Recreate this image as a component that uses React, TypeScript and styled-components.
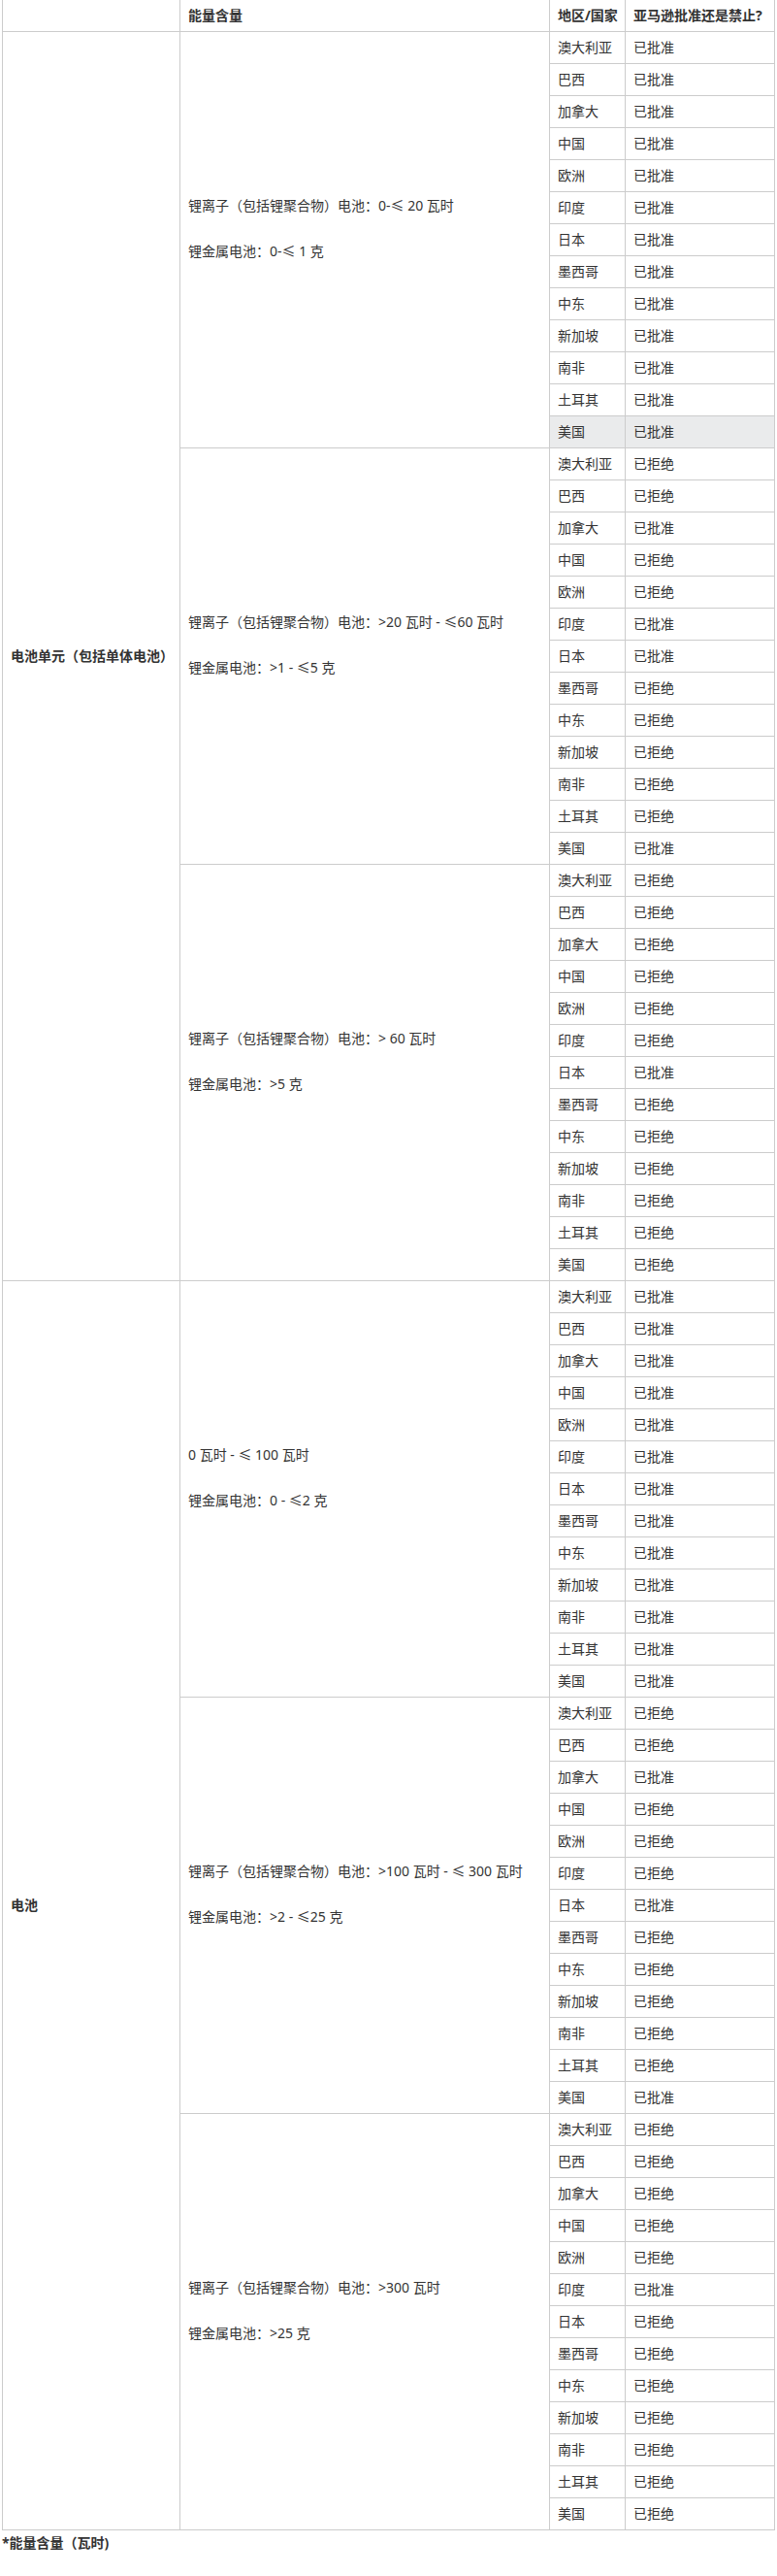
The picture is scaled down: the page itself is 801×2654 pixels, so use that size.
import React from "react";
import styled, { createGlobalStyle } from "styled-components";

const GlobalStyle = createGlobalStyle`
  html, body {
    margin: 0;
    padding: 0;
    background: #ffffff;
  }
  body {
    font-family: "Noto Sans", "Noto Sans CJK SC", sans-serif;
    font-size: 14px;
    color: #333333;
  }
`;

type Status = "已批准" | "已拒绝";

interface Group {
  energy: [string, string];
  results: Status[];
}

interface Section {
  title: string;
  groups: Group[];
}

const regions = [
  "澳大利亚",
  "巴西",
  "加拿大",
  "中国",
  "欧洲",
  "印度",
  "日本",
  "墨西哥",
  "中东",
  "新加坡",
  "南非",
  "土耳其",
  "美国",
];

const A: Status = "已批准";
const R: Status = "已拒绝";

const sections: Section[] = [
  {
    title: "电池单元（包括单体电池）",
    groups: [
      {
        energy: ["锂离子（包括锂聚合物）电池：0-≤ 20 瓦时", "锂金属电池：0-≤ 1 克"],
        results: [A, A, A, A, A, A, A, A, A, A, A, A, A],
      },
      {
        energy: [
          "锂离子（包括锂聚合物）电池：>20 瓦时 - ≤60 瓦时",
          "锂金属电池：>1 - ≤5 克",
        ],
        results: [R, R, A, R, R, A, A, R, R, R, R, R, A],
      },
      {
        energy: ["锂离子（包括锂聚合物）电池：> 60 瓦时", "锂金属电池：>5 克"],
        results: [R, R, R, R, R, R, A, R, R, R, R, R, R],
      },
    ],
  },
  {
    title: "电池",
    groups: [
      {
        energy: ["0 瓦时 - ≤ 100 瓦时", "锂金属电池：0 - ≤2 克"],
        results: [A, A, A, A, A, A, A, A, A, A, A, A, A],
      },
      {
        energy: [
          "锂离子（包括锂聚合物）电池：>100 瓦时 - ≤ 300 瓦时",
          "锂金属电池：>2 - ≤25 克",
        ],
        results: [R, R, A, R, R, R, A, R, R, R, R, R, A],
      },
      {
        energy: ["锂离子（包括锂聚合物）电池：>300 瓦时", "锂金属电池：>25 克"],
        results: [R, R, R, R, R, A, R, R, R, R, R, R, R],
      },
    ],
  },
];

const Page = styled.div`
  padding: 0 2px;
`;

const Table = styled.table`
  width: 100%;
  border-collapse: collapse;
  table-layout: fixed;
`;

const HeadCell = styled.th`
  border: 1px solid #cccccc;
  border-top: none;
  height: 32px;
  padding: 0 8px;
  text-align: left;
  font-weight: bold;
  line-height: 16px;
  white-space: nowrap;
  overflow: visible;
  box-sizing: border-box;
`;

const Cell = styled.td<{ $shaded?: boolean }>`
  border: 1px solid #cccccc;
  height: 33px;
  padding: 0 8px;
  line-height: 16px;
  box-sizing: border-box;
  vertical-align: middle;
  background: ${({ $shaded }) => ($shaded ? "#eaebec" : "#ffffff")};
`;

const TitleCell = styled(Cell)`
  font-weight: bold;
`;

const Para = styled.p`
  margin: 0 0 23px;
  line-height: 24px;
`;

const Note = styled.div`
  font-weight: bold;
  line-height: 26px;
`;

export default function App() {
  return (
    <Page>
      <GlobalStyle />
      <Table>
        <colgroup>
          <col style={{ width: 183 }} />
          <col style={{ width: 381 }} />
          <col style={{ width: 78 }} />
          <col />
        </colgroup>
        <thead>
          <tr>
            <HeadCell />
            <HeadCell>能量含量</HeadCell>
            <HeadCell>地区/国家</HeadCell>
            <HeadCell>亚马逊批准还是禁止?</HeadCell>
          </tr>
        </thead>
        <tbody>
          {sections.map((section, si) =>
            section.groups.map((group, gi) =>
              regions.map((region, ri) => {
                const shaded = si === 0 && gi === 0 && ri === regions.length - 1;
                return (
                  <tr key={`${si}-${gi}-${ri}`}>
                    {gi === 0 && ri === 0 && (
                      <TitleCell rowSpan={section.groups.length * regions.length}>
                        {section.title}
                      </TitleCell>
                    )}
                    {ri === 0 && (
                      <Cell rowSpan={regions.length}>
                        <Para>{group.energy[0]}</Para>
                        <Para>{group.energy[1]}</Para>
                      </Cell>
                    )}
                    <Cell $shaded={shaded}>{region}</Cell>
                    <Cell $shaded={shaded}>{group.results[ri]}</Cell>
                  </tr>
                );
              })
            )
          )}
        </tbody>
      </Table>
      <Note>*能量含量（瓦时)</Note>
    </Page>
  );
}
